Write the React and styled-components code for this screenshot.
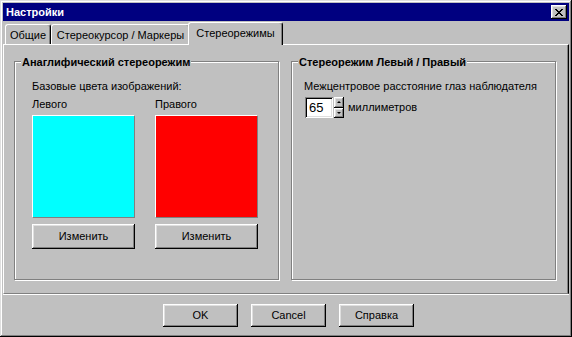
import React from 'react'
import styled, { createGlobalStyle } from 'styled-components'

const GlobalStyle = createGlobalStyle`
    html, body {
        margin: 0;
        padding: 0;
        background: #c0c0c0;
    }
    body {
        font-family: "Liberation Sans", Arial, sans-serif;
        font-size: 11px;
        color: #000;
    }
`

const raised = `
    box-shadow: inset -1px -1px 0 #000, inset 1px 1px 0 #fff,
        inset -2px -2px 0 #808080, inset 2px 2px 0 #dfdfdf;
`

const Window = styled.div`
    box-sizing: border-box;
    width: 572px;
    height: 337px;
    padding: 3px;
    display: flex;
    flex-direction: column;
    background: #c0c0c0;
    box-shadow: inset -1px -1px 0 #000, inset 1px 1px 0 #dfdfdf,
        inset -2px -2px 0 #808080, inset 2px 2px 0 #fff;
`

const TitleBar = styled.div`
    height: 18px;
    flex: none;
    display: flex;
    align-items: center;
    justify-content: space-between;
    padding: 0 2px 0 2px;
    background: #000080;
`

const TitleText = styled.span`
    color: #fff;
    font-weight: bold;
    line-height: 13px;
    padding-left: 1px;
`

const CloseButton = styled.div`
    box-sizing: border-box;
    width: 16px;
    height: 14px;
    display: flex;
    align-items: center;
    justify-content: center;
    background: #c0c0c0;
    ${raised};
`

const TabStrip = styled.div`
    height: 23px;
    flex: none;
    display: flex;
    align-items: flex-end;
    padding-left: 2px;
`

const Tab = styled.div`
    box-sizing: border-box;
    width: ${p => p.$w}px;
    height: ${p => (p.$active ? 23 : 20)}px;
    margin-bottom: ${p => (p.$active ? -1 : 0)}px;
    margin-left: ${p => (p.$active ? -2 : 0)}px;
    position: relative;
    z-index: ${p => (p.$active ? 2 : 1)};
    padding-top: 4px;
    line-height: 13px;
    text-align: center;
    white-space: nowrap;
    background: #c0c0c0;
    border-top: 1px solid #fff;
    border-left: 1px solid #fff;
    border-right: 1px solid #000;
    border-radius: 3px 3px 0 0;
    box-shadow: inset -1px 0 0 #808080;
`

const TabPanel = styled.div`
    box-sizing: border-box;
    height: 250px;
    flex: none;
    display: flex;
    align-items: flex-start;
    gap: 12px;
    padding: 16px 0 0 10px;
    border-top: 1px solid #fff;
    border-left: 1px solid #fff;
    border-right: 1px solid #000;
    border-bottom: 1px solid #808080;
    box-shadow: inset -1px 0 0 #808080;
`

const GroupBox = styled.div`
    box-sizing: border-box;
    position: relative;
    width: 265px;
    height: 219px;
    padding: 18px 0 0 ${p => p.$left}px;
    border: 1px solid #808080;
    box-shadow: inset 1px 1px 0 #fff, 1px 1px 0 #fff;
`

const GroupTitle = styled.span`
    position: absolute;
    top: -6px;
    left: 6px;
    padding: 0 1px;
    background: #c0c0c0;
    font-weight: bold;
    line-height: 13px;
    white-space: nowrap;
`

const Caption = styled.div`
    line-height: 13px;
    white-space: nowrap;
`

const ColorColumns = styled.div`
    display: flex;
    gap: 20px;
    margin-top: 5px;
`

const ColorColumn = styled.div`
    display: flex;
    flex-direction: column;
    width: 103px;
`

const ColumnLabel = styled.div`
    line-height: 13px;
    margin-bottom: 4px;
`

const Swatch = styled.div`
    box-sizing: border-box;
    height: 103px;
    margin-bottom: 6px;
    background: ${p => p.$color};
    border: 1px solid;
    border-color: #fff #808080 #808080 #fff;
`

const PushButton = styled.button`
    box-sizing: border-box;
    width: ${p => p.$w}px;
    height: ${p => p.$h}px;
    padding: 0;
    border: none;
    background: #c0c0c0;
    font: inherit;
    color: #000;
    line-height: 13px;
    ${raised};
`

const SpinRow = styled.div`
    display: flex;
    align-items: center;
    margin-top: 4px;
`

const EditBox = styled.div`
    box-sizing: border-box;
    width: 28px;
    height: 21px;
    margin-left: 1px;
    padding: 3px 0 0 4px;
    background: #fff;
    font-size: 13px;
    line-height: 15px;
    box-shadow: inset 1px 1px 0 #808080, inset -1px -1px 0 #fff,
        inset 2px 2px 0 #000, inset -2px -2px 0 #dfdfdf;
`

const SpinButtons = styled.div`
    display: flex;
    flex-direction: column;
    width: 10px;
    height: 21px;
    margin-left: 1px;
`

const SpinButton = styled.div`
    flex: 1;
    display: flex;
    align-items: center;
    justify-content: center;
    background: #c0c0c0;
    ${raised};
`

const Arrow = styled.span`
    width: 0;
    height: 0;
    border-left: 2px solid transparent;
    border-right: 2px solid transparent;
    ${p => (p.$dir === 'up'
        ? 'border-bottom: 2px solid #000;'
        : 'border-top: 2px solid #000;')}
`

const UnitLabel = styled.span`
    margin-left: 4px;
    line-height: 13px;
`

const ButtonBar = styled.div`
    flex: 1;
    display: flex;
    justify-content: center;
    align-items: flex-start;
    gap: 13px;
    padding: 9px 0 0 5px;
    border-top: 1px solid #fff;
`

const CloseGlyph = () => (
    <svg width="8" height="7" viewBox="0 0 8 7" shapeRendering="crispEdges">
        {[[0, 6], [1, 5], [2, 4], [3, 3], [4, 2], [5, 1], [6, 0]].map(([a, b], i) => (
            <g key={i} fill="#000">
                <rect x={a} y={i} width="2" height="1" />
                <rect x={b} y={i} width="2" height="1" />
            </g>
        ))}
    </svg>
)

const App = () => {
    return (
        <Window>
            <GlobalStyle />
            <TitleBar>
                <TitleText>Настройки</TitleText>
                <CloseButton><CloseGlyph /></CloseButton>
            </TitleBar>

            <TabStrip>
                <Tab $w={46}>Общие</Tab>
                <Tab $w={139}>Стереокурсор / Маркеры</Tab>
                <Tab $w={95} $active>Стереорежимы</Tab>
            </TabStrip>

            <TabPanel>
                <GroupBox $left={17}>
                    <GroupTitle>Анаглифический стереорежим</GroupTitle>
                    <Caption>Базовые цвета изображений:</Caption>
                    <ColorColumns>
                        <ColorColumn>
                            <ColumnLabel>Левого</ColumnLabel>
                            <Swatch $color="#00ffff" />
                            <PushButton $w={103} $h={25}>Изменить</PushButton>
                        </ColorColumn>
                        <ColorColumn>
                            <ColumnLabel>Правого</ColumnLabel>
                            <Swatch $color="#ff0000" />
                            <PushButton $w={103} $h={25}>Изменить</PushButton>
                        </ColorColumn>
                    </ColorColumns>
                </GroupBox>

                <GroupBox $left={12}>
                    <GroupTitle>Стереорежим Левый / Правый</GroupTitle>
                    <Caption>Межцентровое расстояние глаз наблюдателя</Caption>
                    <SpinRow>
                        <EditBox>65</EditBox>
                        <SpinButtons>
                            <SpinButton><Arrow $dir="up" /></SpinButton>
                            <SpinButton><Arrow $dir="down" /></SpinButton>
                        </SpinButtons>
                        <UnitLabel>миллиметров</UnitLabel>
                    </SpinRow>
                </GroupBox>
            </TabPanel>

            <ButtonBar>
                <PushButton $w={75} $h={23}>OK</PushButton>
                <PushButton $w={75} $h={23}>Cancel</PushButton>
                <PushButton $w={75} $h={23}>Справка</PushButton>
            </ButtonBar>
        </Window>
    )
}

export default App
